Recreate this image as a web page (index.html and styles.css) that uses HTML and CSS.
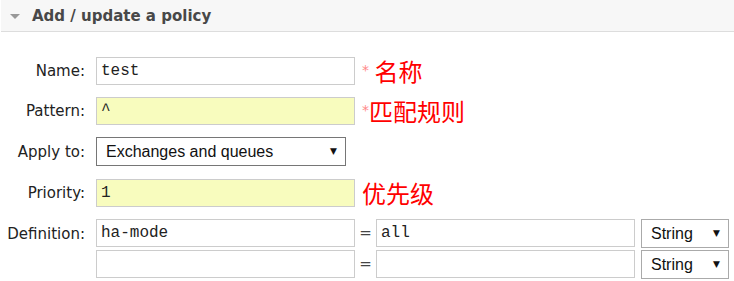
FILE: index.html
```html
<!DOCTYPE html>
<html lang="en">
<head>
    <meta charset="UTF-8">
    <title>Add / update a policy</title>
    <link rel="stylesheet" href="styles.css">
</head>
<body>

<div class="section">
    <div class="section-header">
        <span class="toggle"></span>
        <h2>Add / update a policy</h2>
    </div>

    <div class="policy-form">
        <div class="row">
            <label class="row-label">Name:</label>
            <input class="text-input" type="text" value="test">
            <span class="note"><span class="mand">*</span> 名称</span>
        </div>
        <div class="row">
            <label class="row-label">Pattern:</label>
            <input class="text-input highlight" type="text" value="^">
            <span class="note"><span class="mand">*</span>匹配规则</span>
        </div>
        <div class="row row-select">
            <label class="row-label">Apply to:</label>
            <div class="select-wrap apply-select">
                <select>
                    <option>Exchanges and queues</option>
                    <option>Exchanges</option>
                    <option>Queues</option>
                </select>
            </div>
        </div>
        <div class="row">
            <label class="row-label">Priority:</label>
            <input class="text-input highlight" type="text" value="1">
            <span class="note">优先级</span>
        </div>
        <div class="row">
            <label class="row-label">Definition:</label>
            <div class="definition">
                <div class="def-row">
                    <input class="text-input" type="text" value="ha-mode">
                    <span class="equals">=</span>
                    <input class="text-input" type="text" value="all">
                    <div class="select-wrap type-select">
                        <select>
                            <option>String</option>
                            <option>Number</option>
                            <option>Boolean</option>
                            <option>List</option>
                        </select>
                    </div>
                </div>
                <div class="def-row">
                    <input class="text-input" type="text" value="">
                    <span class="equals">=</span>
                    <input class="text-input" type="text" value="">
                    <div class="select-wrap type-select">
                        <select>
                            <option>String</option>
                            <option>Number</option>
                            <option>Boolean</option>
                            <option>List</option>
                        </select>
                    </div>
                </div>
            </div>
        </div>
    </div>
</div>

</body>
</html>
```

FILE: styles.css
```css
body {
    font-family: "DejaVu Sans", Verdana, sans-serif;
    font-size: 15px;
    color: #222;
    background-color: #fff;
    margin: 0;
}

.section-header {
    display: flex;
    align-items: center;
    height: 31px;
    margin-left: 1px;
    padding-left: 9px;
    background-color: #f7f7f7;
    border-bottom: 1px solid #ddd;
}

.toggle {
    width: 0;
    height: 0;
    border-left: 5px solid transparent;
    border-right: 5px solid transparent;
    border-top: 5px solid #999;
    margin-right: 12px;
    margin-top: 1px;
}

.section-header h2 {
    margin: 0;
    font-size: 15px;
    font-weight: bold;
    color: #484848;
}

.policy-form {
    padding-top: 25px;
}

.row {
    display: flex;
    align-items: center;
    margin-bottom: 12px;
}

.row-select {
    margin-bottom: 13px;
}

.row-label {
    width: 85px;
    margin-right: 11px;
    text-align: right;
    flex-shrink: 0;
}

.row:last-child {
    align-items: flex-start;
}

.row:last-child .row-label {
    padding-top: 6px;
}

.text-input {
    box-sizing: border-box;
    width: 259px;
    height: 28px;
    margin: 0;
    padding: 0 4px;
    border: 1px solid #ccc;
    border-radius: 0;
    font-family: "Liberation Mono", "Courier New", monospace;
    font-size: 16px;
    color: #222;
    background-color: #fff;
    outline: none;
}

.text-input.highlight {
    background-color: #f8fcbe;
}

.note {
    margin-left: 7px;
    font-family: "Microsoft YaHei", "Noto Sans CJK SC", sans-serif;
    font-size: 24px;
    color: #f00;
    line-height: 1;
}

.mand {
    font-family: "DejaVu Sans", Verdana, sans-serif;
    font-size: 14px;
    color: #f88;
    vertical-align: 6px;
}

.select-wrap {
    position: relative;
    box-sizing: border-box;
    height: 29px;
}

.select-wrap select {
    appearance: none;
    -webkit-appearance: none;
    box-sizing: border-box;
    width: 100%;
    height: 100%;
    margin: 0;
    padding: 0 0 0 9px;
    border: 1px solid #767676;
    border-radius: 0;
    background-color: #fff;
    font-family: "Liberation Sans", Arial, sans-serif;
    font-size: 16px;
    color: #111;
}

.select-wrap::after {
    content: "\25BC";
    position: absolute;
    right: 9px;
    top: 9px;
    font-size: 9px;
    color: #111;
    pointer-events: none;
}

.apply-select {
    width: 250px;
}

.type-select {
    width: 88px;
    margin-left: 6px;
}

.type-select select {
    border-color: #aaa;
}

.definition {
    display: flex;
    flex-direction: column;
    gap: 2px;
}

.def-row {
    display: flex;
    align-items: flex-start;
}

.equals {
    width: 21px;
    text-align: center;
    line-height: 28px;
    color: #444;
}
```
